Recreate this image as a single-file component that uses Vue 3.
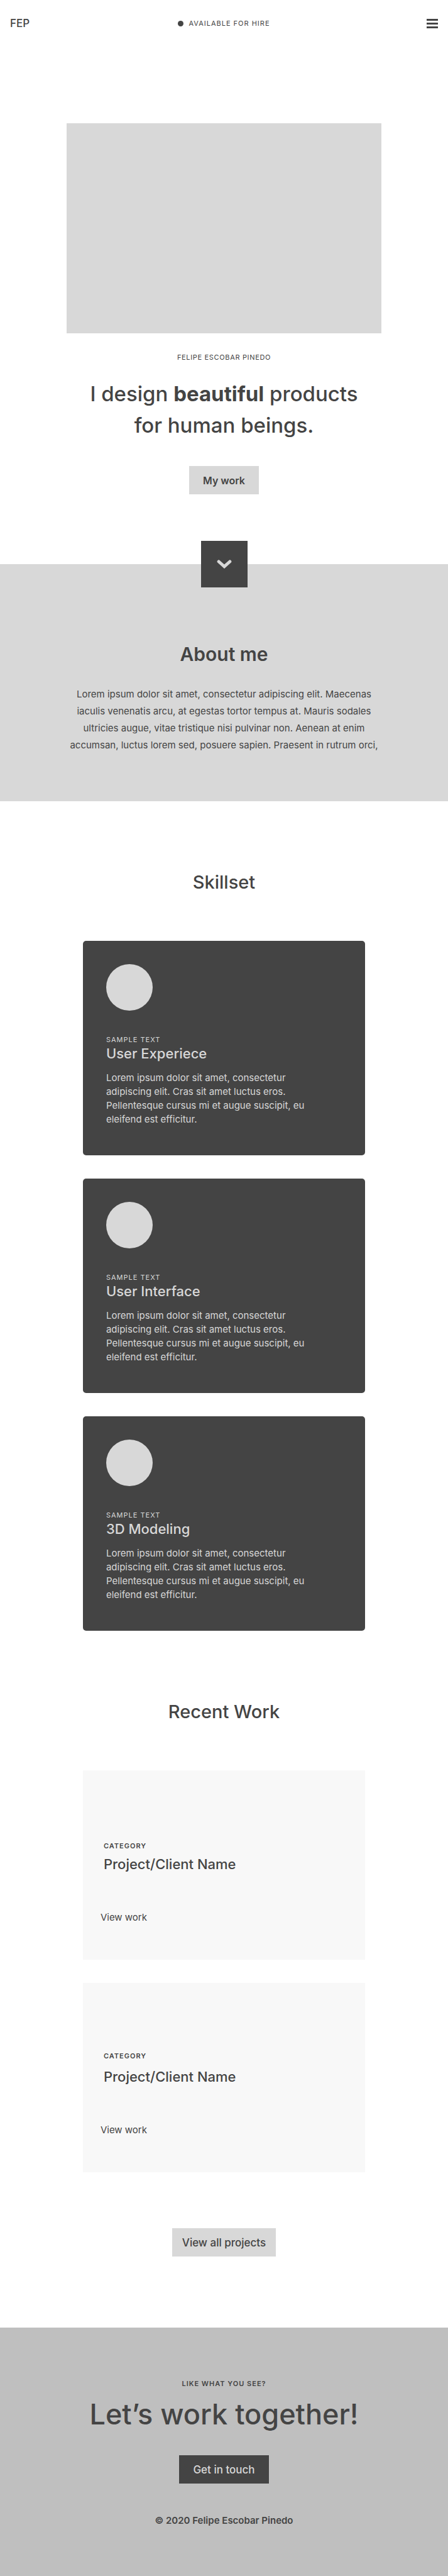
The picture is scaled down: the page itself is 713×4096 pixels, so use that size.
<script setup>
const skills = [
  { title: 'User Experiece' },
  { title: 'User Interface' },
  { title: '3D Modeling' },
]
const projects = [
  { id: 1, spaced: false },
  { id: 2, spaced: true },
]
</script>

<template>
  <div class="page">
    <header class="topbar">
      <a class="brand" href="#">FEP</a>
      <p class="status"><span class="dot"></span>AVAILABLE FOR HIRE</p>
      <button class="menu" type="button" aria-label="Menu">
        <svg viewBox="0 0 18 15" width="18" height="15" fill="#444">
          <rect width="18" height="3" />
          <rect y="6" width="18" height="3" />
          <rect y="12" width="18" height="3" />
        </svg>
      </button>
    </header>

    <main>
      <section class="hero">
        <div class="cover"></div>
        <p class="label">FELIPE ESCOBAR PINEDO</p>
        <h1>I design <strong>beautiful</strong> products<br />for human beings.</h1>
        <a class="btn mine" href="#work">My work</a>
      </section>

      <section id="about" class="about">
        <a class="down" href="#about" aria-label="Scroll down">
          <svg viewBox="0 0 24 14" width="24" height="14" fill="none" stroke="#d8d8d8" stroke-width="5" stroke-linecap="round">
            <path d="M3.200 3 L12 10.800 L20.800 3" />
          </svg>
        </a>
        <h2>About me</h2>
        <p>
          Lorem ipsum dolor sit amet, consectetur adipiscing elit. Maecenas iaculis venenatis arcu,
          at egestas tortor tempus at. Mauris sodales ultricies augue, vitae tristique nisi pulvinar
          non. Aenean at enim accumsan, luctus lorem sed, posuere sapien. Praesent in rutrum orci,
        </p>
      </section>

      <section class="block">
        <h2>Skillset</h2>
        <div class="cards">
          <article v-for="skill in skills" :key="skill.title" class="skill">
            <div class="avatar"></div>
            <p class="label">SAMPLE TEXT</p>
            <h3>{{ skill.title }}</h3>
            <p class="text">
              Lorem ipsum dolor sit amet, consectetur adipiscing elit. Cras sit amet luctus eros.
              Pellentesque cursus mi et augue suscipit, eu eleifend est efficitur.
            </p>
          </article>
        </div>
      </section>

      <section id="work" class="block">
        <h2>Recent Work</h2>
        <div class="cards">
          <article v-for="project in projects" :key="project.id" class="project" :class="{ spaced: project.spaced }">
            <p class="label strong">CATEGORY</p>
            <h3>Project/Client Name</h3>
            <a class="view" href="#work">View work</a>
          </article>
        </div>
        <a class="btn all" href="#work">View all projects</a>
      </section>
    </main>

    <footer class="footer">
      <p class="label strong">LIKE WHAT YOU SEE?</p>
      <h2>Let’s work together!</h2>
      <a class="btn dark" href="#contact">Get in touch</a>
      <p class="copy">© 2020 Felipe Escobar Pinedo</p>
    </footer>
  </div>
</template>

<style>
body {
  margin: 0;
  background: #fff;
}
</style>

<style scoped>
.page {
  font-family: Inter, "Liberation Sans", sans-serif;
  font-size: 15px;
  color: #444;
}
h1, h2, h3, p {
  margin: 0;
}
a {
  color: inherit;
  text-decoration: none;
}
.topbar {
  display: grid;
  grid-template-columns: 1fr auto 1fr;
  align-items: center;
  height: 74px;
  padding: 0 16px;
}
.brand {
  font-size: 17px;
  font-weight: 500;
}
.status {
  display: flex;
  align-items: center;
  gap: 8px;
  font-size: 11px;
  line-height: 16px;
  letter-spacing: 1px;
}
.dot {
  width: 9px;
  height: 9px;
  border-radius: 50%;
  background: #444;
}
.menu {
  justify-self: end;
  display: flex;
  padding: 0;
  border: 0;
  background: none;
}
.label {
  font-size: 11px;
  line-height: 16px;
  letter-spacing: 1px;
}
.strong {
  font-weight: 600;
}
.hero {
  display: flex;
  flex-direction: column;
  align-items: center;
  padding: 122px 0 111px;
  text-align: center;
}
.cover {
  width: 70.3%;
  aspect-ratio: 3 / 2;
  background: #d8d8d8;
}
.hero .label {
  margin-top: 30px;
  letter-spacing: 0.06em;
}
h1 {
  margin-top: 25px;
  font-size: 33px;
  line-height: 50px;
  font-weight: 500;
}
h1 strong {
  font-weight: 700;
}
.btn {
  display: flex;
  align-items: center;
  justify-content: center;
  height: 45px;
  padding: 0 16px;
  background: #d8d8d8;
  font-size: 17px;
  font-weight: 500;
}
.mine {
  margin-top: 40px;
  padding: 0 22px;
  font-size: 16px;
  font-weight: 600;
}
.about {
  position: relative;
  padding: 123px 0 76px;
  background: #d8d8d8;
  text-align: center;
}
.down {
  position: absolute;
  top: -37px;
  left: 50%;
  display: flex;
  align-items: center;
  justify-content: center;
  width: 74px;
  height: 74px;
  margin-left: -37px;
  background: #444;
}
h2 {
  font-size: 30px;
  line-height: 40px;
  font-weight: 500;
}
.about h2 {
  font-weight: 600;
}
.about p {
  width: 70.3%;
  margin: 30px auto 0;
  line-height: 27px;
}
.block {
  display: flex;
  flex-direction: column;
  align-items: center;
  padding-top: 109px;
}
.block > h2 {
  font-size: 29px;
}
.cards {
  display: flex;
  flex-direction: column;
  gap: 37px;
  width: 63%;
  margin-top: 73px;
}
.skill {
  padding: 37px 37px 46px;
  border-radius: 5px;
  background: #444;
  color: #d8d8d8;
}
.avatar {
  width: 74px;
  height: 74px;
  margin-bottom: 38px;
  border-radius: 50%;
  background: #d8d8d8;
}
h3 {
  font-size: 22px;
  line-height: 28px;
  font-weight: 500;
}
.text {
  max-width: 330px;
  margin-top: 14px;
  line-height: 22px;
}
.project {
  box-sizing: border-box;
  min-height: 301px;
  padding: 112px 33px 54px;
  background: #f8f8f8;
}
.project h3 {
  margin-top: 7px;
}
.project.spaced {
  padding-top: 108px;
}
.project.spaced h3 {
  margin-top: 11px;
}
.view {
  display: block;
  margin: 60px 0 0 -5px;
  line-height: 22px;
}
.all {
  margin: 89px 0 113px;
}
.footer {
  display: flex;
  flex-direction: column;
  align-items: center;
  padding: 81px 0 78px;
  background: #bfbfbf;
  text-align: center;
}
.footer h2 {
  margin-top: 13px;
  font-size: 45px;
  line-height: 56px;
}
.dark {
  margin-top: 37px;
  padding: 0 22px;
  background: #444;
  color: #d8d8d8;
}
.copy {
  margin-top: 48px;
  line-height: 22px;
  font-weight: 600;
}
</style>
